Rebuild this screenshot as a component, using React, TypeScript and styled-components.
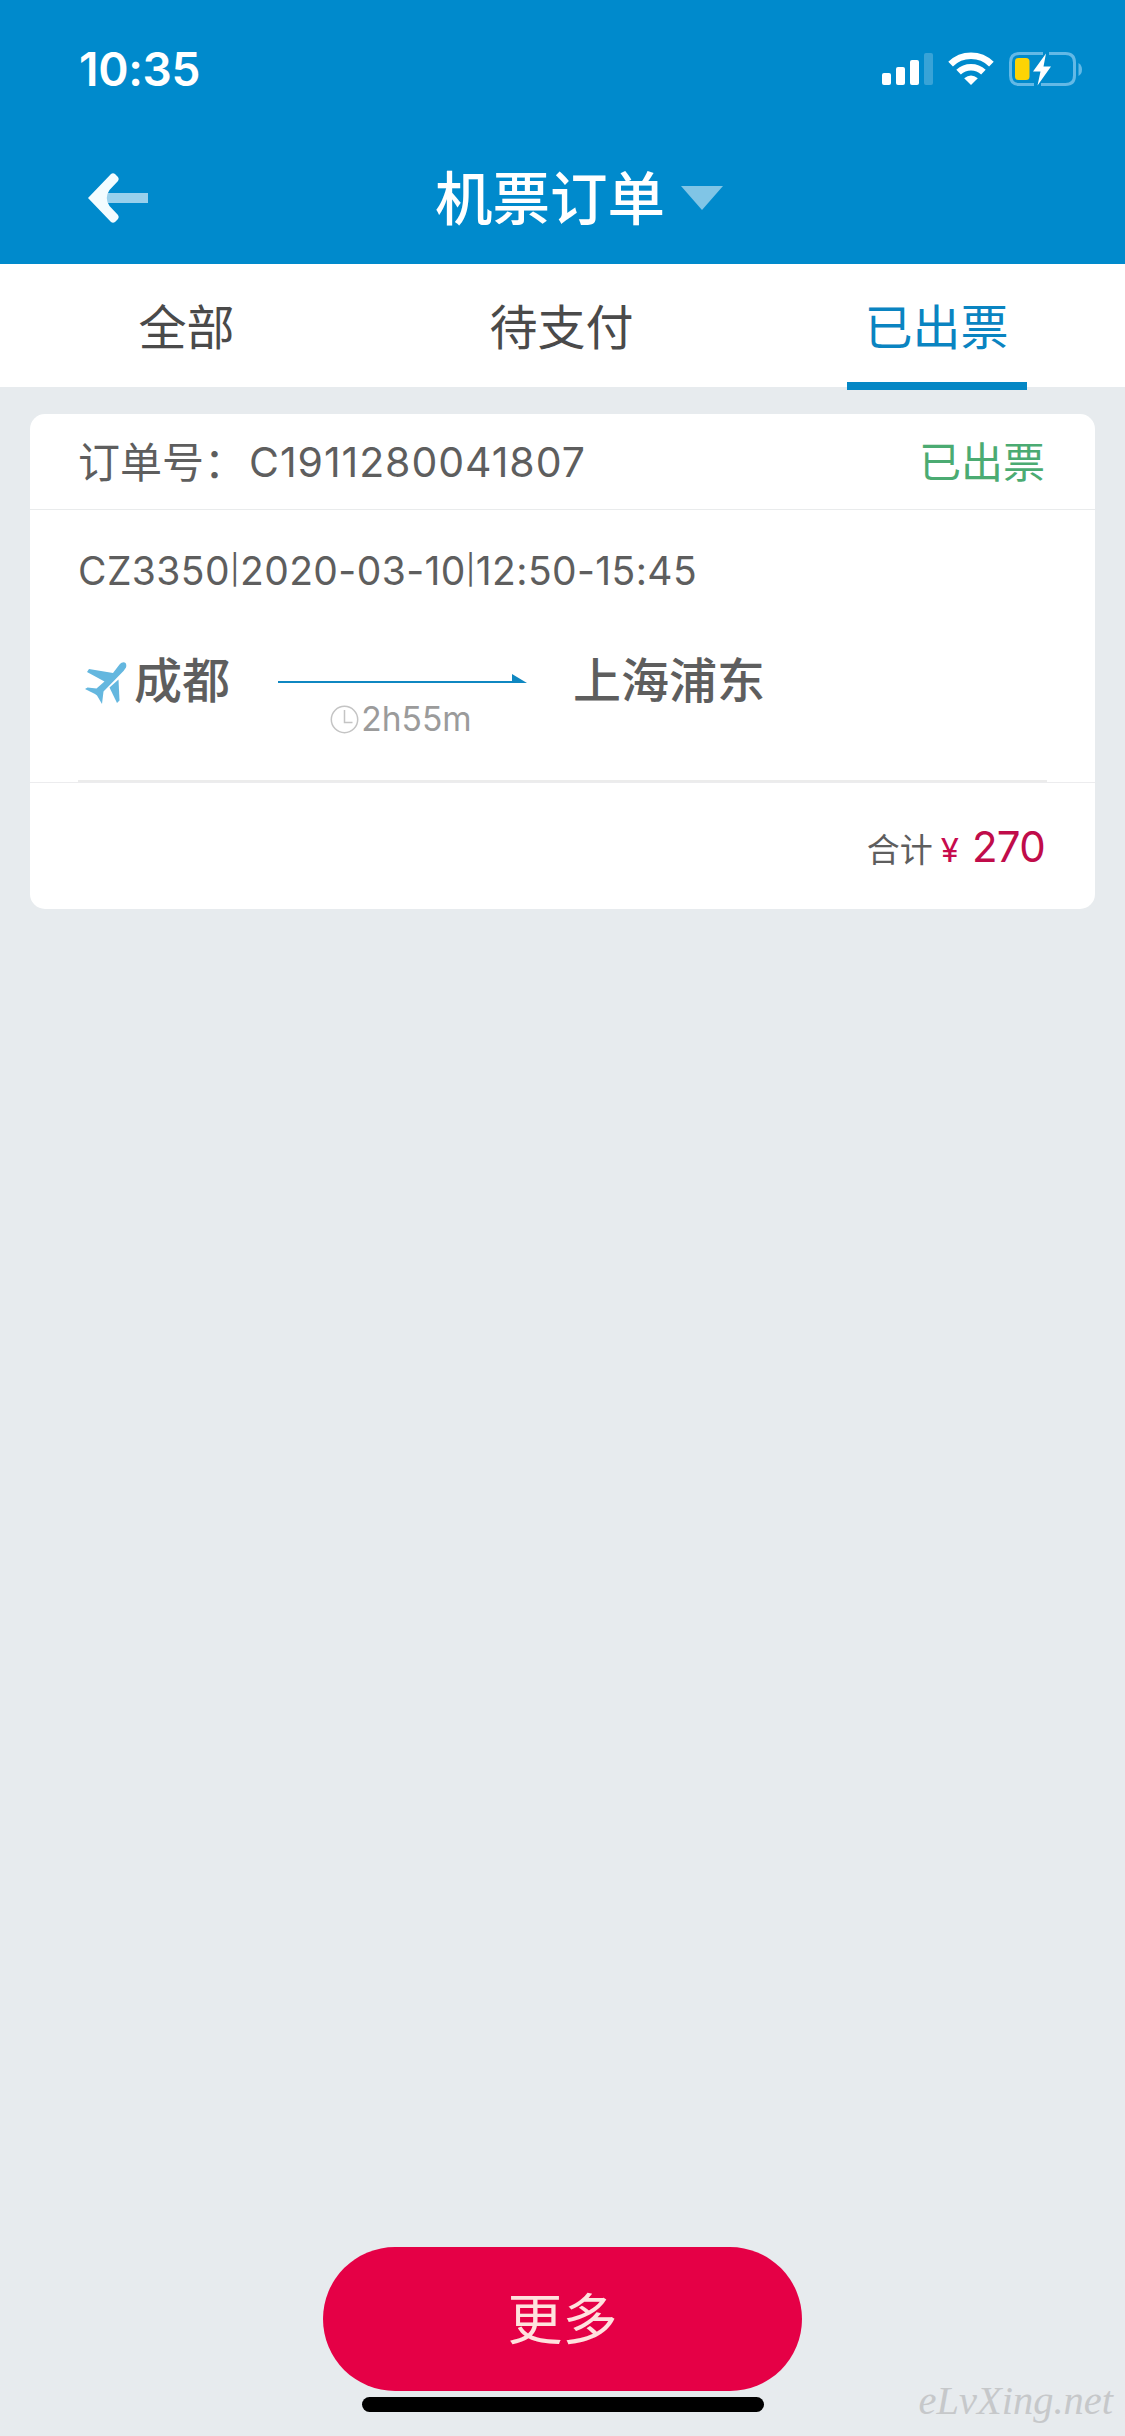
import React from "react";
import styled, { createGlobalStyle } from "styled-components";

const blue = "#008acc";

const GlobalStyle = createGlobalStyle`
  * { box-sizing: border-box; }
  body {
    margin: 0;
    background: #e7ebee;
    font-family: Inter, "Noto Sans CJK SC", sans-serif;
    color: #5e5e5e;
  }
  svg { flex: none; }
`;

const Screen = styled.div`
  position: relative;
  display: flex;
  flex-direction: column;
  width: 1125px;
  height: 2436px;
  overflow: hidden;
  background: #e7ebee;
`;

const Header = styled.header`
  height: 264px;
  background: ${blue};
  color: #fff;
`;

const StatusBar = styled.div`
  display: flex;
  justify-content: space-between;
  align-items: center;
  height: 138px;
  padding: 0 42px 0 79px;
`;

const Clock = styled.span`
  font-size: 46px;
  font-weight: 600;
  line-height: 60px;
  letter-spacing: -0.3px;
`;

const StatusIcons = styled.div`
  display: flex;
  align-items: center;
  gap: 15px;
`;

const NavBar = styled.div`
  display: grid;
  grid-template-columns: 350px 1fr 315px;
  align-items: center;
  height: 120px;
`;

const BackButton = styled.button`
  display: flex;
  width: 62px;
  margin-left: 87px;
  padding: 0;
  border: 0;
  background: none;
`;

const TitleGroup = styled.div`
  display: flex;
  align-items: center;
  justify-content: flex-end;
  gap: 16px;
  padding: 2px 87px 0 0;
`;

const Title = styled.h1`
  margin: 0;
  font-size: 57.5px;
  font-weight: 500;
  line-height: 80px;
  white-space: nowrap;
`;

const Tabs = styled.nav`
  display: grid;
  grid-template-columns: repeat(3, 1fr);
  height: 123px;
  background: #fff;
`;

const Tab = styled.div<{ $active?: boolean }>`
  display: flex;
  flex-direction: column;
  align-items: center;
  height: 126px;
  padding: 28px 2px 0 0;
  color: ${(p) => (p.$active ? "#0a84c1" : "#4a4a4a")};
  font-size: 48px;
  line-height: 72px;

  &::after {
    content: "";
    width: 180px;
    height: 8px;
    margin-top: auto;
    background: ${(p) => (p.$active ? "#0587c5" : "transparent")};
  }
`;

const Card = styled.section`
  margin: 27px 30px 0;
  height: 495px;
  border-radius: 15px;
  background: #fff;
`;

const CardHead = styled.div`
  display: flex;
  justify-content: space-between;
  height: 96px;
  padding: 17px 50px 0 48px;
  border-bottom: 1px solid #e9ebec;
  font-size: 42px;
  line-height: 64px;
`;

const OrderLabel = styled.span`
  display: flex;
`;

const OrderNumber = styled.span`
  margin-left: 3px;
  font-size: 41px;
  line-height: 62px;
  letter-spacing: 0.95px;
`;

const Status = styled.span`
  color: #4bab72;
`;

const CardBody = styled.div`
  height: 273px;
  margin: 0 48px;
  padding-top: 32px;
  border-bottom: 3px solid #ececec;
`;

const FlightInfo = styled.div`
  display: flex;
  align-items: center;
  font-size: 39px;
  line-height: 56px;
  letter-spacing: 0.4px;
  white-space: nowrap;
`;

const Pipe = styled.span`
  margin-bottom: 1px;
  font-size: 29px;
  line-height: 56px;
`;

const Route = styled.div`
  display: flex;
  height: 90px;
  margin-top: 46px;
`;

const City = styled.span`
  font-size: 48px;
  font-weight: 500;
  line-height: 72px;
`;

const PlaneBox = styled.span`
  display: flex;
  width: 56px;
  padding: 16px 0 0 7px;
`;

const Leg = styled.div`
  display: flex;
  flex-direction: column;
  align-items: center;
  width: 249px;
  margin: 29px 46px 0 48px;
`;

const Duration = styled.div`
  display: flex;
  align-items: center;
  gap: 2px;
  margin: 13px 3px 0 0;
  color: #9b9b9b;
  font-size: 33.5px;
  line-height: 44px;
`;

const CardFoot = styled.div`
  display: flex;
  justify-content: flex-end;
  align-items: baseline;
  height: 126px;
  padding: 32px 50px 0 0;
  font-size: 33px;
  line-height: 64px;
`;

const BodyEdge = styled.div`
  height: 1px;
  margin-top: -1px;
  background: #ececee;
`;

const Yen = styled.span`
  margin-left: 8px;
  color: #c70b4d;
  font-size: 33px;
`;

const Amount = styled.span`
  margin-left: 13px;
  color: #c00c4a;
  font-size: 42px;
  letter-spacing: -0.7px;
`;

const MoreButton = styled.button`
  width: 479px;
  height: 144px;
  margin: auto auto 45px 323px;
  padding: 0;
  border: 0;
  border-radius: 72px;
  background: #e50046;
  color: #ffe2de;
  font: 400 55px/144px Inter, "Noto Sans CJK SC", sans-serif;
`;

const HomeIndicator = styled.div`
  position: absolute;
  left: 362px;
  bottom: 24px;
  width: 402px;
  height: 15px;
  border-radius: 8px;
  background: #000;
`;

const Watermark = styled.span`
  position: absolute;
  right: 12px;
  bottom: 10px;
  color: #c6c8ca;
  font: italic 400 40.5px/50px "Liberation Serif", serif;
`;

const SignalIcon = () => (
  <svg width="51" height="34" viewBox="0 0 51 34" fill="#fff">
    <rect x="0" y="21" width="9" height="12" rx="2" />
    <rect x="14" y="15" width="9" height="18" rx="2" />
    <rect x="28" y="8" width="9" height="25" rx="2" />
    <rect x="42" y="1" width="9" height="32" rx="2" opacity="0.22" />
  </svg>
);

const WifiIcon = () => (
  <svg width="46" height="34" viewBox="0 0 46 34">
    <g fill="none" stroke="#fff" strokeWidth="6.6">
      <path d="M2.6 12.2 A29 29 0 0 1 43.4 12.2" />
      <path d="M10.6 20.2 A18 18 0 0 1 35.4 20.2" />
    </g>
    <path fill="#fff" d="M16.2 26.2 Q23 20.6 29.8 26.2 L23 33Z" />
  </svg>
);

const BatteryIcon = () => (
  <svg width="74" height="34" viewBox="0 0 74 34">
    <g fill="none" stroke="#63b9e6" strokeWidth="3">
      <path d="M34 1.5H10.5Q1.5 1.5 1.5 10.5V23.5Q1.5 32.5 10.5 32.5H25" />
      <path d="M40 1.5H56.5Q65.5 1.5 65.5 10.5V23.5Q65.5 32.5 56.5 32.5H32" />
    </g>
    <path fill="#63b9e6" d="M69.5 11Q73 13 73 17.5T69.5 24Z" />
    <rect x="6" y="6" width="14.5" height="22" rx="3.5" fill="#fdd404" />
    <path fill="#fff" d="M37 1.5 24 19.5H31.5L28.5 33.5 42 14.5H34.5Z" />
  </svg>
);

const BackIcon = () => (
  <svg width="62" height="52" viewBox="0 0 62 52">
    <path d="M17 21H61V31H17Z" fill="#99d0ec" />
    <path
      fill="#f3fcff"
      d="M1 26 24 2Q26 .5 28 2L31 5Q32.500 7 31 9L22.500 18Q17 26 22.500 34L31 43Q32.500 45 31 47L28 50Q26 51.500 24 50Z"
    />
  </svg>
);

const Caret = styled.span`
  width: 0;
  height: 0;
  margin-bottom: 3px;
  border: 21px solid transparent;
  border-top: 24px solid #80c5e6;
  border-bottom: 0;
`;

const PlaneIcon = () => (
  <svg width="43" height="44" viewBox="0 0 43 44" fill="#64b7df">
    <path d="M28 12 34.500 3.500C38-.5 42.500 1 41 6.500L38.500 10 18.500 30.500 17 43 12 34.500 10 33 0 28 2.500 26.500 11.500 27.500 19.500 20.500 2 11 4 8Z" />
    <path d="M24.500 26.500 33.500 18.500 34.500 39.500 32 42Z" />
  </svg>
);

const RouteArrow = () => (
  <svg width="249" height="10" viewBox="0 0 249 10" fill="#0f87c1">
    <path d="M0 7H234V0L249 9H0Z" />
  </svg>
);

const ClockIcon = () => (
  <svg width="29" height="29" viewBox="0 0 29 29" fill="none" stroke="#c4c4c4" strokeWidth="1.5">
    <circle cx="14.500" cy="14.500" r="13.200" />
    <path d="M14.500 5V17.500H22.500" />
  </svg>
);

const tabs = ["全部", "待支付", "已出票"];

export default function App() {
  return (
    <Screen>
      <GlobalStyle />
      <Header>
        <StatusBar>
          <Clock>10:35</Clock>
          <StatusIcons>
            <SignalIcon />
            <WifiIcon />
            <BatteryIcon />
          </StatusIcons>
        </StatusBar>
        <NavBar>
          <BackButton aria-label="返回">
            <BackIcon />
          </BackButton>
          <TitleGroup>
            <Title>机票订单</Title>
            <Caret />
          </TitleGroup>
        </NavBar>
      </Header>
      <Tabs>
        {tabs.map((tab) => (
          <Tab key={tab} $active={tab === "已出票"}>
            {tab}
          </Tab>
        ))}
      </Tabs>
      <Card>
        <CardHead>
          <OrderLabel>
            订单号：<OrderNumber>C1911280041807</OrderNumber>
          </OrderLabel>
          <Status>已出票</Status>
        </CardHead>
        <CardBody>
          <FlightInfo>
            CZ3350<Pipe>|</Pipe>2020-03-10<Pipe>|</Pipe>12:50-15:45
          </FlightInfo>
          <Route>
            <PlaneBox>
              <PlaneIcon />
            </PlaneBox>
            <City>成都</City>
            <Leg>
              <RouteArrow />
              <Duration>
                <ClockIcon />
                2h55m
              </Duration>
            </Leg>
            <City>上海浦东</City>
          </Route>
        </CardBody>
        <BodyEdge />
        <CardFoot>
          合计<Yen>¥</Yen>
          <Amount>270</Amount>
        </CardFoot>
      </Card>
      <MoreButton>更多</MoreButton>
      <HomeIndicator />
      <Watermark>eLvXing.net</Watermark>
    </Screen>
  );
}
